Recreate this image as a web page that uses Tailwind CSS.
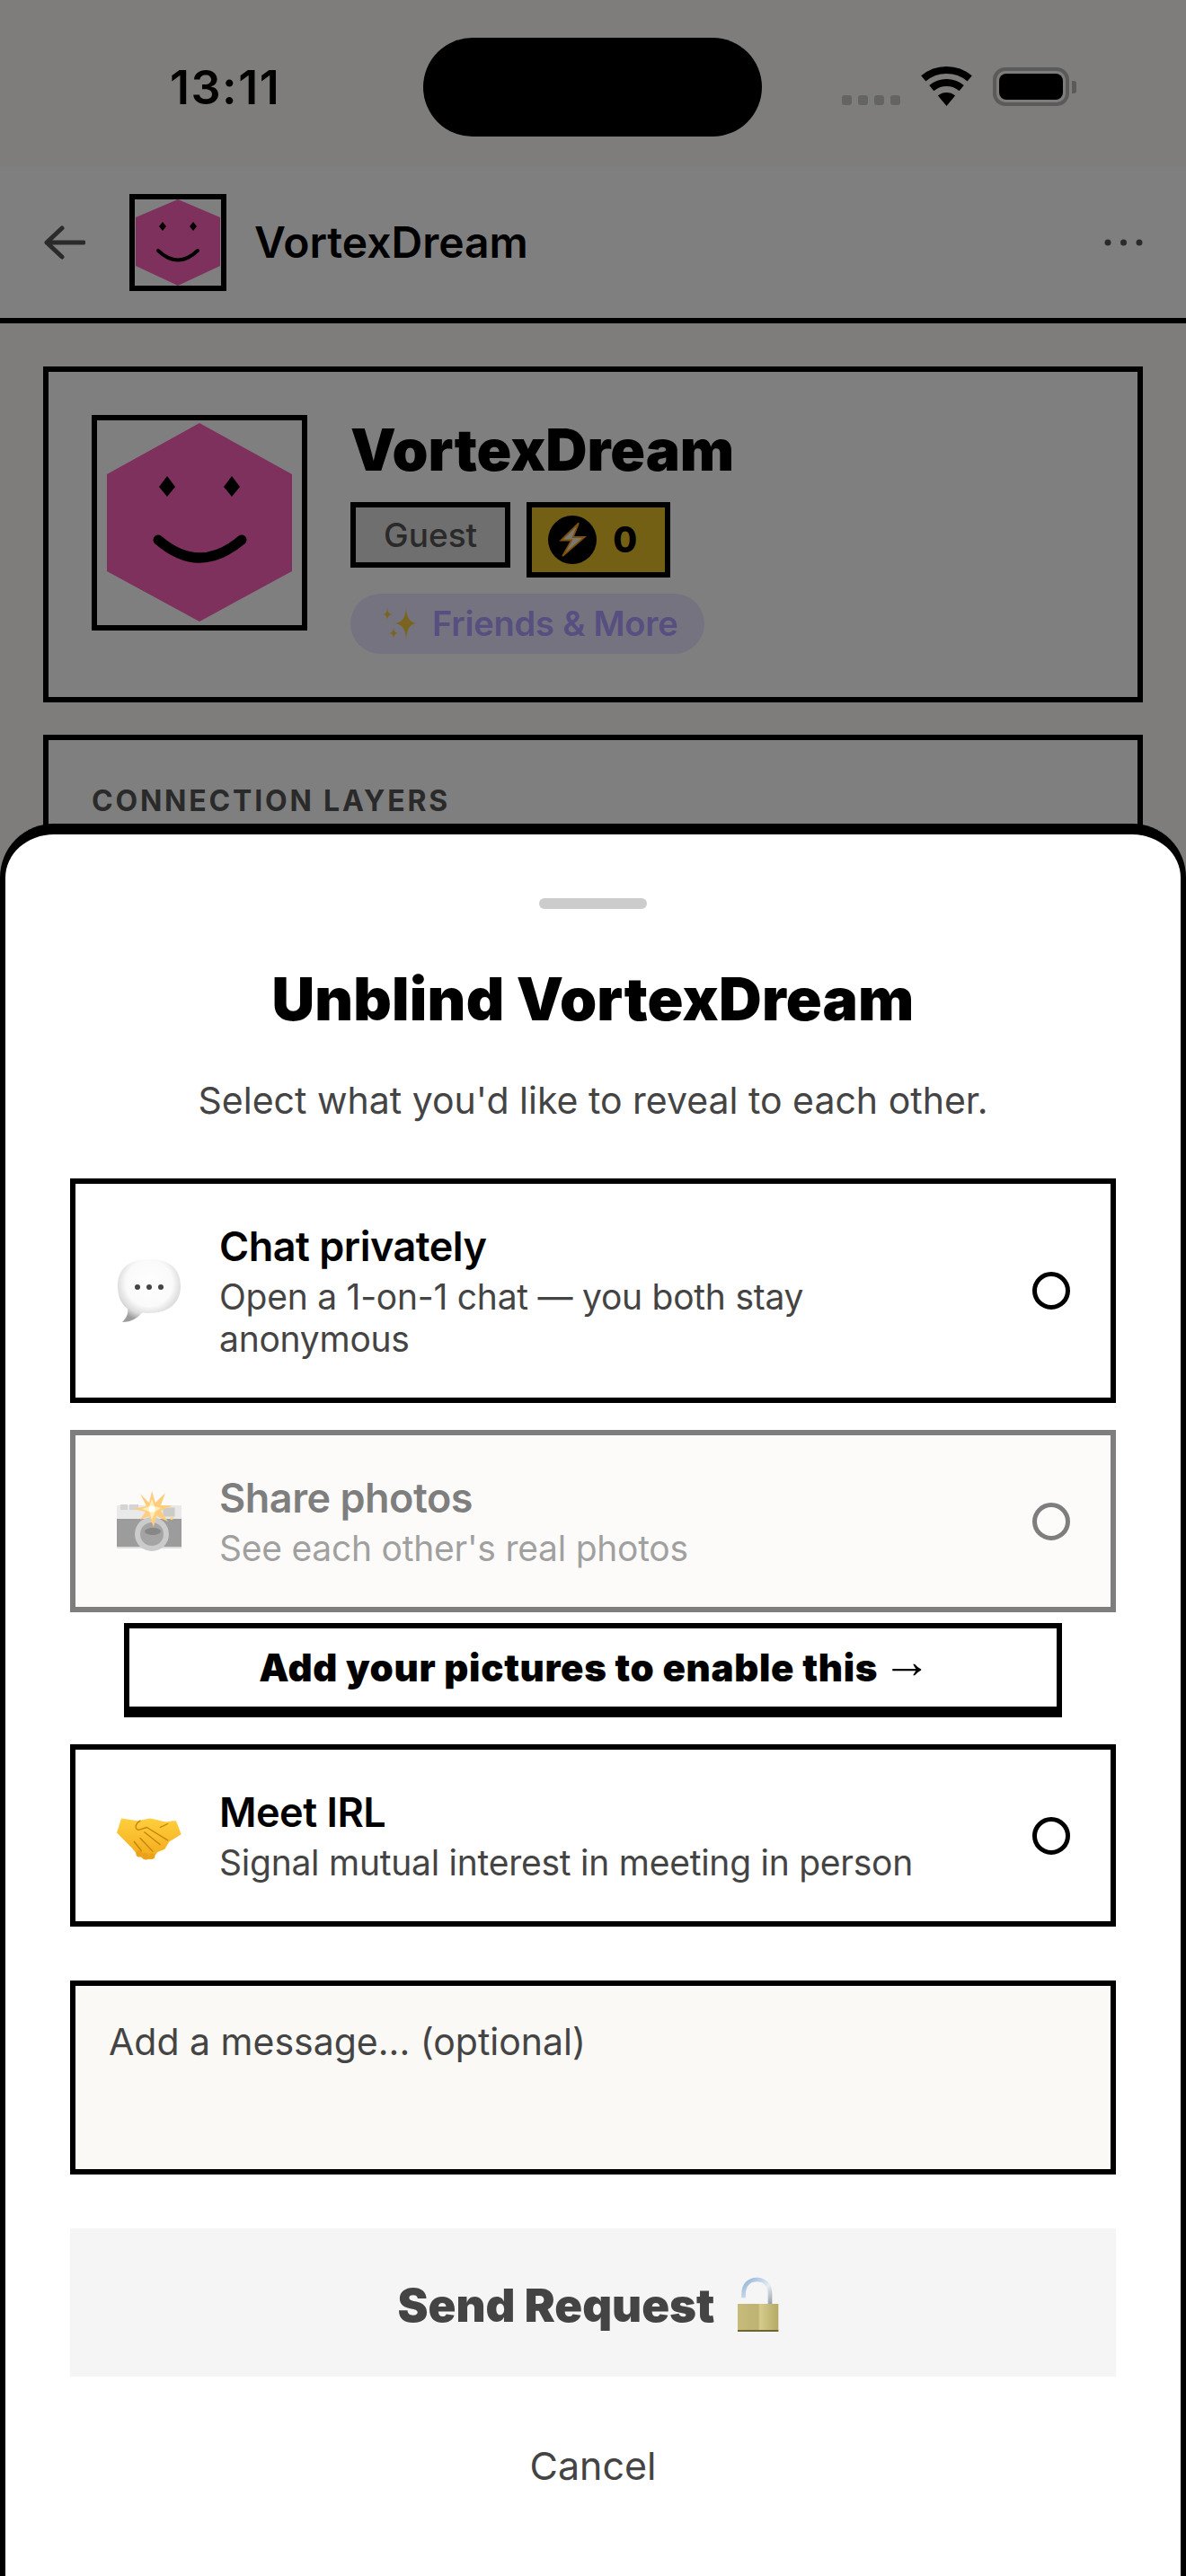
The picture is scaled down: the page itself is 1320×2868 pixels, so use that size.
<!DOCTYPE html>
<html lang="en">
<head>
  <meta charset="UTF-8">
  <title>Unblind</title>
  <script src="https://cdn.jsdelivr.net/npm/@tailwindcss/browser@4"></script>
</head>
<body class="m-0 font-['Inter',sans-serif]">
<div class="relative w-[1320px] h-[2868px] overflow-hidden bg-[#fcfbf7] text-black">

  <!-- Status bar -->
  <div class="flex h-[186px] items-start pl-[189px]">
    <div class="w-[282px] mt-[67px] text-[52px] leading-[62px] tracking-[1.5px] font-semibold text-black">13:11</div>
    <div class="w-[377px] h-[110px] mt-[42px] rounded-full bg-black"></div>
    <div class="flex items-end ml-[89px] mt-[75px] h-[43px]">
      <div class="flex gap-[7px] mb-[1px]">
        <span class="w-[11px] h-[11px] rounded-[3px] bg-[#c8c8c8]"></span>
        <span class="w-[11px] h-[11px] rounded-[3px] bg-[#c8c8c8]"></span>
        <span class="w-[11px] h-[11px] rounded-[3px] bg-[#c8c8c8]"></span>
        <span class="w-[11px] h-[11px] rounded-[3px] bg-[#c8c8c8]"></span>
      </div>
      <svg class="ml-[23px]" width="57" height="44" viewBox="0 0 57 44" fill="none">
        <path d="M2.8 13.4A40 40 0 0 1 54.2 13.4" stroke="#000" stroke-width="8"/>
        <path d="M11.8 24.1A26 26 0 0 1 45.2 24.1" stroke="#000" stroke-width="8"/>
        <path d="M28.5 44L18.9 32.5A15 15 0 0 1 38.1 32.5Z" fill="#000"/>
      </svg>
      <div class="ml-[23px] flex items-center">
        <div class="w-[85px] h-[43px] rounded-[14px] border-[4px] border-[#b4b4b4] p-[3px]">
          <div class="w-full h-full rounded-[8px] bg-black"></div>
        </div>
        <div class="ml-[3px] w-[5px] h-[14px] rounded-r-[3px] bg-[#b4b4b4]"></div>
      </div>
    </div>
  </div>

  <!-- Header -->
  <div class="flex items-center h-[174px] bg-white border-b-[6px] border-black pl-[49px] pr-[48px]">
    <svg width="46" height="38" viewBox="0 0 46 38" fill="none" stroke="#555" stroke-width="5" stroke-linecap="round" stroke-linejoin="round">
      <path d="M20 3L3 19L20 35M3 19H44"/>
    </svg>
    <div class="ml-[49px] w-[108px] h-[108px] border-[6px] border-black shrink-0">
      <svg class="w-full h-full" viewBox="0 0 96 96">
        <polygon points="48,0 95,20 95,74 48,96 1,74 1,20" fill="#ff62bc"/>
        <polygon points="31,25 35,30 31,35 27,30" fill="#000"/>
        <polygon points="65,25 69,30 65,35 61,30" fill="#000"/>
        <path d="M26 57Q48 78 70 57" fill="none" stroke="#000" stroke-width="4" stroke-linecap="round"/>
      </svg>
    </div>
    <div class="ml-[31px] text-[48px] leading-[58px] font-semibold text-black">VortexDream</div>
    <svg class="ml-auto" width="43" height="8" viewBox="0 0 43 8" fill="#555">
      <circle cx="4" cy="4" r="3.5"/><circle cx="21.5" cy="4" r="3.5"/><circle cx="39" cy="4" r="3.5"/>
    </svg>
  </div>

  <!-- Profile -->
  <div class="mx-[48px] mt-[48px] h-[374px] bg-white border-[6px] border-black p-[48px] flex gap-[48px]">
    <div class="w-[240px] h-[240px] border-[6px] border-black shrink-0">
      <svg class="w-full h-full" viewBox="0 0 228 228">
        <polygon points="114,3 217,60 217,168 114,224 11,168 11,60" fill="#ff62bc"/>
        <polygon points="78,62 87,74 78,85 69,74" fill="#000"/>
        <polygon points="150,62 159,74 150,85 141,74" fill="#000"/>
        <path d="M68 133Q114 173 161 133" fill="none" stroke="#000" stroke-width="11" stroke-linecap="round"/>
      </svg>
    </div>
    <div class="flex flex-col items-start">
      <div class="h-[78px] text-[64px] leading-[78px] font-black text-black">VortexDream</div>
      <div class="mt-[19px] flex items-start gap-[18px]">
        <div class="h-[73px] px-[31px] border-[6px] border-black bg-[#dedede] flex items-center text-[37px] font-medium text-[#555]">Guest</div>
        <div class="h-[84px] w-[160px] pl-[18px] border-[6px] border-black bg-[#e6c02a] flex items-center gap-[18px]">
          <svg width="54" height="54" viewBox="0 0 54 54">
            <circle cx="27" cy="27" r="27" fill="#000"/>
            <path d="M34 8.5L14.500 27.500H26.200L16.200 45L40.500 24H27.800Z" fill="#f4efd8" stroke="#ff9f1c" stroke-width="1.800"/>
          </svg>
          <span class="text-[39px] leading-[46px] font-extrabold text-black">0</span>
        </div>
      </div>
      <div class="mt-[18px] h-[67px] pl-[36px] pr-[29px] rounded-full bg-[#eae6ff] flex items-center gap-[16px]">
        <svg width="39" height="39" viewBox="0 0 39 39" fill="#f6cb3c">
          <path d="M26 0Q26 19 39 19Q26 19 26 39Q26 19 12 19Q26 19 26 0Z"/>
          <path d="M5 1Q5 9 11 9Q5 9 5 17Q5 9 0 9Q5 9 5 1Z"/>
          <path d="M12 23Q12 30 17 30Q12 30 12 37Q12 30 7 30Q12 30 12 23Z"/>
        </svg>
        <span class="text-[38px] tracking-[-0.2px] font-semibold text-[#ae9eff]">Friends &amp; More</span>
      </div>
    </div>
  </div>

  <!-- Connection layers, mostly under the sheet -->
  <div class="mx-[48px] mt-[36px] h-[200px] bg-white border-[6px] border-black px-[48px] pt-[50px]">
    <div class="text-[32px] leading-[36px] font-bold tracking-[2.8px] text-[#555]">CONNECTION LAYERS</div>
  </div>

  <!-- Dim -->
  <div class="absolute inset-0 bg-black/50"></div>

  <!-- Sheet -->
  <div class="absolute left-0 right-0 top-[917px] bottom-0 bg-white border-x-[6px] border-t-[12px] border-black rounded-t-[60px] px-[72px] pt-[71px]">
    <div class="w-[120px] h-[12px] mx-auto rounded-full bg-[#cccccc]"></div>
    <div class="mt-[60px] text-center text-[66px] leading-[80px] tracking-[0.2px] font-black text-black">Unblind VortexDream</div>
    <div class="mt-[43px] text-center text-[41px] leading-[60px] text-[#444444]">Select what you'd like to reveal to each other.</div>

    <!-- Chat -->
    <div class="mt-[57px] border-[6px] border-black bg-white flex items-center pl-[46px] pr-[45px] py-[42px]">
      <svg class="shrink-0" width="72" height="72" viewBox="0 0 72 72">
        <defs>
          <radialGradient id="bubble" cx="0.5" cy="0.38" r="0.62">
            <stop offset="0" stop-color="#ffffff"/><stop offset="0.6" stop-color="#fafafa"/><stop offset="0.82" stop-color="#dcdcdc"/><stop offset="1" stop-color="#9c9c9c"/>
          </radialGradient>
        </defs>
        <path d="M36 1C58 1 71 11 71 31C71 50 57 61 36 61C33 61 30 60.500 28 60.500C24 66 16 71 6 71C11 66 13 61 12 56C5 51 1 42 1 31C1 11 14 1 36 1Z" fill="url(#bubble)"/>
        <circle cx="23" cy="32" r="3" fill="#444"/><circle cx="36" cy="32" r="3" fill="#444"/><circle cx="49" cy="32" r="3" fill="#444"/>
      </svg>
      <div class="ml-[42px] flex-1 min-w-0">
        <div class="text-[45px] leading-[55px] tracking-[-0.5px] font-semibold text-black">Chat privately</div>
        <div class="mt-[5px] text-[39px] leading-[47px] tracking-[-0.25px] text-[#444444] pr-[200px]">Open a 1-on-1 chat — you both stay anonymous</div>
      </div>
      <span class="shrink-0 w-[42px] h-[42px] rounded-full border-[5px] border-black"></span>
    </div>

    <!-- Photos, disabled -->
    <div class="mt-[30px] opacity-50 border-[6px] border-black bg-[#faf9f5] flex items-center pl-[46px] pr-[45px] py-[42px]">
      <svg class="shrink-0" width="72" height="72" viewBox="11 7 72 72">
        <rect x="11" y="25" width="72" height="16" fill="#d4d4d4"/>
        <rect x="15" y="24" width="8" height="6" fill="#aaa"/><rect x="25" y="24" width="10" height="6" fill="#aaa"/>
        <rect x="11" y="40" width="72" height="32" fill="#3c3c3c"/>
        <rect x="11" y="71" width="72" height="2" fill="#bbb"/>
        <rect x="62" y="27" width="14" height="11" fill="#999" stroke="#ccc"/>
        <circle cx="72" cy="39" r="2" fill="#f5b915"/>
        <circle cx="50" cy="57" r="19" fill="#999"/>
        <circle cx="50" cy="57" r="13" fill="#4c4c4c"/>
        <ellipse cx="51" cy="54" rx="9" ry="4" fill="#111"/>
        <polygon points="50,9 54,22 65,11 60,25 73,25 60,31 68,43 55,37 52,49 47,37 37,41 43,32 29,29 44,26 37,12 47,22" fill="#ff9c00"/>
        <polygon points="50,18 53,26 60,28 54,32 50,41 47,32 39,29 47,26" fill="#ffdc70"/>
        <circle cx="50" cy="29" r="3.500" fill="#fff"/>
      </svg>
      <div class="ml-[42px] flex-1 min-w-0">
        <div class="text-[45px] leading-[55px] tracking-[-0.5px] font-semibold text-black">Share photos</div>
        <div class="mt-[5px] text-[39px] leading-[47px] tracking-[-0.25px] text-[#444444]">See each other's real photos</div>
      </div>
      <span class="shrink-0 w-[42px] h-[42px] rounded-full border-[5px] border-black"></span>
    </div>

    <!-- Add pictures -->
    <div class="mt-[12px] mx-[60px] h-[105px] pl-[5px] border-x-[6px] border-t-[6px] border-b-[12px] border-black bg-white flex items-center justify-center gap-[5px] text-[42px] tracking-[0.65px] font-black text-black">
      <span>Add your pictures to enable this</span><span class="mb-[16px] font-['Liberation_Sans'] font-normal text-[54px] leading-[54px]">→</span>
    </div>

    <!-- Meet -->
    <div class="mt-[30px] border-[6px] border-black bg-white flex items-center pl-[46px] pr-[45px] py-[42px]">
      <svg class="shrink-0" width="72" height="72" viewBox="30 -7.500 216 216">
        <defs>
          <linearGradient id="hand" x1="0" y1="0" x2="0" y2="1">
            <stop offset="0" stop-color="#ffcf3e"/><stop offset="1" stop-color="#f2a91a"/>
          </linearGradient>
        </defs>
        <path d="M45 42L100 50L140 42C170 45 190 60 215 50L228 50L245 95L205 120L190 145L165 155L150 178L125 180L100 165L80 140L30 90Z" fill="url(#hand)"/>
        <circle cx="105" cy="160" r="11" fill="#eba21a"/><circle cx="125" cy="168" r="11" fill="#eba21a"/><circle cx="147" cy="168" r="10" fill="#eba21a"/>
        <path d="M108 50C88 62 90 82 106 80L130 72L200 115M122 88L175 130M108 108L150 152M88 120L112 150M200 60L175 72" fill="none" stroke="#c98208" stroke-width="4" stroke-linecap="round" stroke-linejoin="round"/>
      </svg>
      <div class="ml-[42px] flex-1 min-w-0">
        <div class="text-[45px] leading-[55px] tracking-[-0.5px] font-semibold text-black">Meet IRL</div>
        <div class="mt-[5px] text-[39px] leading-[47px] tracking-[-0.25px] text-[#444444]">Signal mutual interest in meeting in person</div>
      </div>
      <span class="shrink-0 w-[42px] h-[42px] rounded-full border-[5px] border-black"></span>
    </div>

    <!-- Message -->
    <textarea class="block mt-[60px] w-full h-[216px] resize-none border-[6px] border-black bg-[#faf9f5] pl-[37px] pt-[37px] text-[41px] leading-[50px] outline-none placeholder:text-[#444444]" placeholder="Add a message... (optional)"></textarea>

    <!-- Send -->
    <div class="mt-[60px] h-[165px] pt-[8px] bg-[#f5f5f5] flex items-center justify-center text-[51px] font-black text-[#444444]">
      <span>Send Request</span>
      <svg class="ml-[12px] mt-[5px]" width="70" height="80" viewBox="0 0 210 240">
        <defs>
          <linearGradient id="brass" x1="0" y1="0" x2="1" y2="0">
            <stop offset="0" stop-color="#c6bc7a"/><stop offset="0.5" stop-color="#bfb273"/><stop offset="0.55" stop-color="#d5cb8c"/><stop offset="1" stop-color="#b5a965"/>
          </linearGradient>
          <linearGradient id="shackle" x1="0" y1="0" x2="1" y2="1">
            <stop offset="0" stop-color="#8fb2d8"/><stop offset="0.6" stop-color="#e6edf4"/><stop offset="1" stop-color="#9aa3ad"/>
          </linearGradient>
        </defs>
        <path d="M62 85V72C62 40 82 24 106 24C130 24 150 40 150 72V105" fill="none" stroke="url(#shackle)" stroke-width="14"/>
        <rect x="42" y="105" width="136" height="90" fill="url(#brass)"/>
        <rect x="42" y="192" width="136" height="6" fill="#6f6530"/>
      </svg>
    </div>

    <!-- Cancel -->
    <div class="mt-[71px] text-center text-[43px] leading-[56px] text-[#444444]">Cancel</div>
  </div>
</div>
</body>
</html>
